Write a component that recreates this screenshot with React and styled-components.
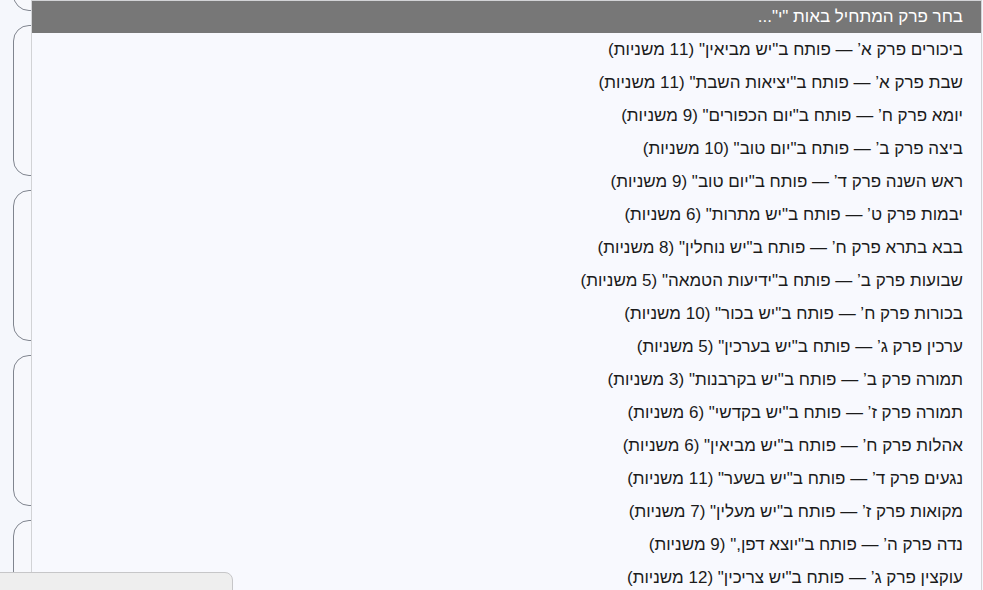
import styled, { createGlobalStyle } from "styled-components";

const GlobalStyle = createGlobalStyle`
  html, body {
    margin: 0;
    padding: 0;
    background: #f5f7fc;
    overflow: hidden;
  }
  body {
    font-family: "Liberation Sans", "DejaVu Sans", sans-serif;
  }
`;

const Page = styled.div`
  position: relative;
  width: 983px;
  height: 590px;
  overflow: hidden;
  background: #f5f7fc;
`;

const CardColumn = styled.div`
  display: flex;
  flex-direction: column;
  gap: 14px;
  margin-top: -140px;
  padding-left: 13px;
`;

const Card = styled.div`
  height: 151px;
  width: 400px;
  box-sizing: border-box;
  border: 1.5px solid #80858f;
  border-radius: 16px;
  background: #f7f8fc;
`;

const Dropdown = styled.div`
  position: absolute;
  top: 0;
  left: 31px;
  width: 951px;
  height: 620px;
  box-sizing: border-box;
  border: 1px solid #d2d3d6;
  background: #f8f9fe;
  direction: rtl;
`;

const Header = styled.div`
  height: 32px;
  background: #777777;
  color: #ffffff;
  font-size: 17px;
  line-height: 32px;
  padding-right: 18px;
`;

const Option = styled.div`
  height: 33px;
  line-height: 33px;
  font-size: 17px;
  color: #1b1b1b;
  padding-right: 18px;
  white-space: nowrap;
`;

const StatusBox = styled.div`
  position: absolute;
  left: -2px;
  bottom: -10px;
  width: 235px;
  height: 28px;
  box-sizing: border-box;
  background: #eeeeee;
  border: 1px solid #c6c6c8;
  border-radius: 0 8px 0 0;
`;

const chapters = [
  'ביכורים פרק א’ — פותח ב"יש מביאין" (11 משניות)',
  'שבת פרק א’ — פותח ב"יציאות השבת" (11 משניות)',
  'יומא פרק ח’ — פותח ב"יום הכפורים" (9 משניות)',
  'ביצה פרק ב’ — פותח ב"יום טוב" (10 משניות)',
  'ראש השנה פרק ד’ — פותח ב"יום טוב" (9 משניות)',
  'יבמות פרק ט’ — פותח ב"יש מתרות" (6 משניות)',
  'בבא בתרא פרק ח’ — פותח ב"יש נוחלין" (8 משניות)',
  'שבועות פרק ב’ — פותח ב"ידיעות הטמאה" (5 משניות)',
  'בכורות פרק ח’ — פותח ב"יש בכור" (10 משניות)',
  'ערכין פרק ג’ — פותח ב"יש בערכין" (5 משניות)',
  'תמורה פרק ב’ — פותח ב"יש בקרבנות" (3 משניות)',
  'תמורה פרק ז’ — פותח ב"יש בקדשי" (6 משניות)',
  'אהלות פרק ח’ — פותח ב"יש מביאין" (6 משניות)',
  'נגעים פרק ד’ — פותח ב"יש בשער" (11 משניות)',
  'מקואות פרק ז’ — פותח ב"יש מעלין" (7 משניות)',
  'נדה פרק ה’ — פותח ב"יוצא דפן," (9 משניות)',
  'עוקצין פרק ג’ — פותח ב"יש צריכין" (12 משניות)',
];

const App = () => {
  return (
    <Page>
      <GlobalStyle />
      <CardColumn>
        <Card />
        <Card />
        <Card />
        <Card />
        <Card />
      </CardColumn>
      <Dropdown>
        <Header>בחר פרק המתחיל באות "י"...</Header>
        {chapters.map((c) => (
          <Option key={c}>{c}</Option>
        ))}
      </Dropdown>
      <StatusBox />
    </Page>
  );
};

export default App;
